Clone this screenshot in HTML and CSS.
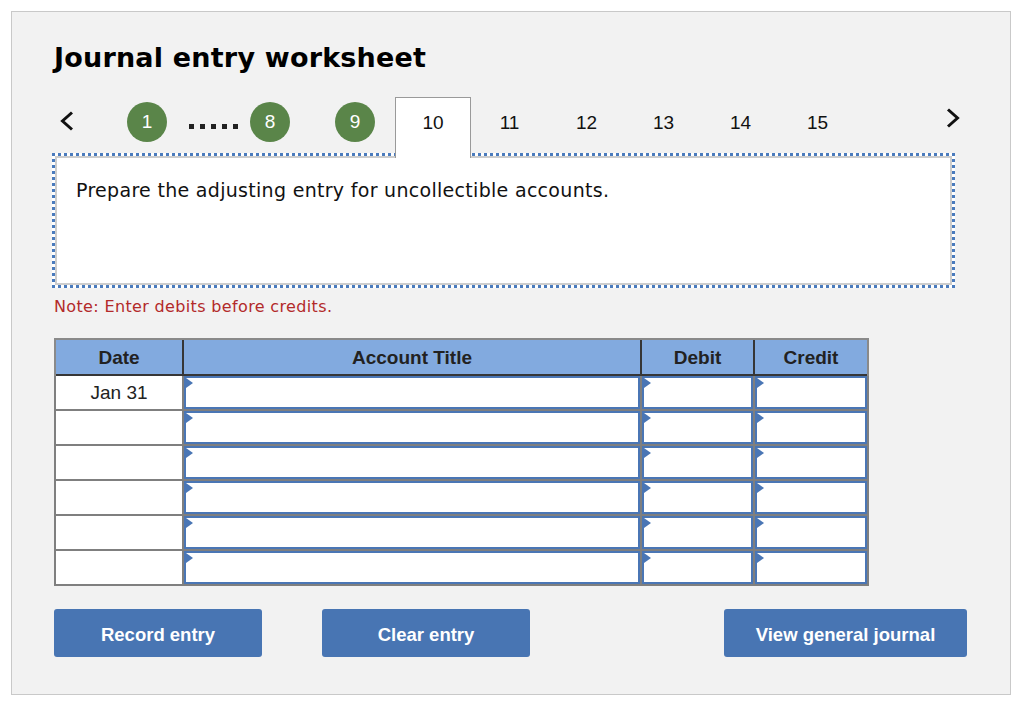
FILE: index.html
```html
<!DOCTYPE html>
<html>
<head>
<meta charset="utf-8">
<link rel="stylesheet" href="styles.css">
</head>
<body>
<div class="panel">
  <h1 class="title">Journal entry worksheet</h1>
  <div class="nav">
    <svg class="chev chev-prev" width="14" height="20" viewBox="0 0 14 20"><polyline points="12,1.5 2.5,10 12,18.5" fill="none" stroke="#111" stroke-width="3"/></svg>
    <span class="circle c1">1</span>
    <span class="dots"><i></i><i></i><i></i><i></i><i></i></span>
    <span class="circle c8">8</span>
    <span class="circle c9">9</span>
    <span class="tab">10</span>
    <span class="slot">11</span>
    <span class="slot">12</span>
    <span class="slot">13</span>
    <span class="slot">14</span>
    <span class="slot">15</span>
    <svg class="chev chev-next" width="14" height="20" viewBox="0 0 14 20"><polyline points="2,1.5 11.5,10 2,18.5" fill="none" stroke="#111" stroke-width="3"/></svg>
  </div>
  <div class="prompt">
    <p class="prompt-text">Prepare the adjusting entry for uncollectible accounts.</p>
  </div>
  <p class="note">Note: Enter debits before credits.</p>
  <div class="journal">
    <div class="jhead">
      <div class="th">Date</div>
      <div class="th">Account Title</div>
      <div class="th">Debit</div>
      <div class="th">Credit</div>
    </div>
    <div class="jbody">
      <div class="td date">Jan 31</div><div class="td"><div class="inp"></div></div><div class="td"><div class="inp"></div></div><div class="td"><div class="inp"></div></div>
      <div class="td date"></div><div class="td"><div class="inp"></div></div><div class="td"><div class="inp"></div></div><div class="td"><div class="inp"></div></div>
      <div class="td date"></div><div class="td"><div class="inp"></div></div><div class="td"><div class="inp"></div></div><div class="td"><div class="inp"></div></div>
      <div class="td date"></div><div class="td"><div class="inp"></div></div><div class="td"><div class="inp"></div></div><div class="td"><div class="inp"></div></div>
      <div class="td date"></div><div class="td"><div class="inp"></div></div><div class="td"><div class="inp"></div></div><div class="td"><div class="inp"></div></div>
      <div class="td date"></div><div class="td"><div class="inp"></div></div><div class="td"><div class="inp"></div></div><div class="td"><div class="inp"></div></div>
    </div>
  </div>
  <div class="actions">
    <button class="btn btn-record">Record entry</button>
    <button class="btn btn-clear">Clear entry</button>
    <button class="btn btn-view">View general journal</button>
  </div>
</div>
</body>
</html>
```

FILE: styles.css
```css
html, body {
  margin: 0;
  padding: 0;
  background: #ffffff;
}

.panel {
  margin: 11px 0 0 11px;
  width: 956px;
  height: 646px;
  padding: 30px 0 6px 42px;
  background: #f2f2f2;
  border: 1px solid #c9c9c9;
  font-family: "Liberation Sans", Arial, sans-serif;
}

.title {
  margin: 0;
  font-family: "DejaVu Sans", Verdana, sans-serif;
  font-weight: bold;
  font-size: 27px;
  line-height: 32px;
  letter-spacing: 0.2px;
  color: #000;
}

.nav {
  display: flex;
  align-items: flex-start;
  height: 56px;
  margin-top: 23px;
}

.chev-prev {
  margin: 14px 0 0 6px;
}

.chev-next {
  margin: 11px 0 0 90px;
}

.circle {
  width: 40px;
  height: 40px;
  border-radius: 50%;
  background: #5a8549;
  color: #fff;
  font-size: 19px;
  line-height: 40px;
  text-align: center;
  margin-top: 5px;
}

.c1 { margin-left: 53px; }
.c8 { margin-left: 12px; }
.c9 { margin-left: 45px; }

.dots {
  display: flex;
  gap: 6px;
  margin: 27px 0 0 22px;
}

.dots i {
  display: block;
  width: 5px;
  height: 5px;
  background: #222;
}

.tab {
  position: relative;
  z-index: 2;
  box-sizing: border-box;
  width: 76px;
  height: 61px;
  margin-left: 20px;
  border: 1px solid #9a9a9a;
  border-bottom: none;
  background: #fff;
  text-align: center;
  font-size: 19px;
  line-height: 49px;
  color: #111;
}

.slot {
  width: 77px;
  text-align: center;
  font-size: 19px;
  line-height: 51px;
  color: #111;
}

.prompt {
  position: relative;
  z-index: 1;
  box-sizing: border-box;
  width: 903px;
  height: 135px;
  margin: 0 0 0 -2px;
  border: 3px dotted #4a7bbd;
  background: #fff;
  box-shadow: inset 0 0 0 2px #cdcdcd;
}

.prompt-text {
  margin: 0;
  padding: 22px 0 0 21px;
  font-family: "DejaVu Sans", Verdana, sans-serif;
  font-size: 19px;
  line-height: 24px;
  letter-spacing: 0.3px;
  color: #111;
}

.note {
  margin: 9px 0 0 0;
  font-family: "DejaVu Sans", Verdana, sans-serif;
  font-size: 16px;
  line-height: 20px;
  letter-spacing: 0.35px;
  color: #b32a2a;
}

.journal {
  width: 815px;
  margin-top: 21px;
}

.jhead, .jbody {
  display: grid;
  grid-template-columns: 126px 456px 111px 112px;
  column-gap: 2px;
}

.jhead {
  background: #363636;
  border: 2px solid #8a8a8a;
  border-bottom: none;
  padding-bottom: 2px;
}

.th {
  height: 34px;
  background: #82aadf;
  font-weight: bold;
  font-size: 19px;
  line-height: 35px;
  text-align: center;
  color: #222;
}

.jbody {
  background: #7f7f7f;
  row-gap: 2px;
  padding: 0 2px 2px 2px;
}

.td {
  height: 33px;
  background: #fff;
}

.date {
  font-size: 19px;
  line-height: 33px;
  text-align: center;
  color: #222;
}

.inp {
  position: relative;
  box-sizing: border-box;
  height: 100%;
  border: 2px solid #4a76b5;
  background: #fff;
}

.inp::before {
  content: "";
  position: absolute;
  left: 0;
  top: 0;
  width: 0;
  height: 0;
  border-left: 7px solid #4a76b5;
  border-top: 5px solid transparent;
  border-bottom: 5px solid transparent;
}

.actions {
  display: flex;
  margin-top: 23px;
}

.btn {
  height: 48px;
  border: none;
  border-radius: 3px;
  background: #4875b3;
  color: #fff;
  font-family: "Liberation Sans", Arial, sans-serif;
  font-weight: bold;
  font-size: 18.5px;
  padding: 3px 0 0 0;
  cursor: pointer;
}

.btn-record { width: 208px; }
.btn-clear { width: 208px; margin-left: 60px; }
.btn-view { width: 243px; margin-left: 194px; }
```
